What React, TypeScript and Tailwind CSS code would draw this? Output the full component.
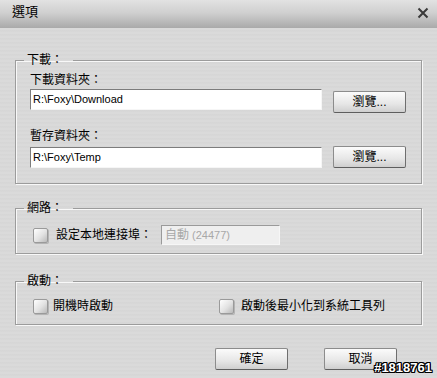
import type { ReactNode } from 'react'

const FONT = "font-['Liberation_Sans','Noto_Sans_CJK_TC',sans-serif]"

function GroupBox({ title, className, children }: { title: string; className?: string; children: ReactNode }) {
  return (
    <fieldset
      className={`mx-[15px] rounded-none border border-[#9c9c9c] px-[8px] shadow-[1px_1px_0_#f8f8f8,inset_1px_1px_0_#f8f8f8] ${className ?? ''}`}
    >
      <legend className="px-[3px] pr-[10px] text-[12px] leading-[14px] text-black">{title}</legend>
      {children}
    </fieldset>
  )
}

function Button({ children, className }: { children: ReactNode; className?: string }) {
  return (
    <button
      type="button"
      className={`flex h-[22px] w-[73px] items-center justify-center rounded-[2px] border border-[#8c8c8c] border-b-[#5e5e5e] border-r-[#6e6e6e] bg-[linear-gradient(#fbfbfb,#e6e6e6_60%,#cfcfcf)] text-[12px] leading-none text-black ${className ?? ''}`}
    >
      {children}
    </button>
  )
}

function Checkbox() {
  return (
    <span className="block h-[15px] w-[15px] shrink-0 rounded-[2px] border border-[#9a9a9a] bg-[linear-gradient(135deg,#ffffff,#e2e2e2_55%,#b9b9b9)] shadow-[1px_1px_0_#b4b4b4]" />
  )
}

function PathInput({ value }: { value: string }) {
  return (
    <div className="flex h-[21px] w-[292px] items-center border border-b-[#f6f6f6] border-l-[#7c7c7c] border-r-[#f6f6f6] border-t-[#7c7c7c] bg-white pl-[2px] font-['Liberation_Sans',sans-serif] text-[11px] text-black">
      {value}
    </div>
  )
}

export default function App() {
  return (
    <div
      className={`relative h-[378px] w-[437px] overflow-hidden bg-[#d8d8d8] bg-[repeating-linear-gradient(180deg,#dadada_0px,#dadada_2px,#d3d3d3_3px,#dcdcdc_4px)] ${FONT}`}
    >
      {/* 標題列 */}
      <div className="flex h-[28px] items-center justify-between bg-[linear-gradient(#e2e2e2,#d0d0d0_45%,#aaaaaa)] pb-[4px] pl-[12px] pr-[8px]">
        <span className="text-[13px] text-black">選項</span>
        <svg width="12" height="12" viewBox="0 0 12 12" className="mt-[2px]">
          <path d="M1.5 1.5 L10.5 10.5 M10.5 1.5 L1.5 10.5" stroke="#3a3a3a" strokeWidth="2" />
        </svg>
      </div>

      {/* 下載 */}
      <GroupBox title="下載：" className="mt-[25px] pb-[15px]">
        <div className="pl-[6px]">
          <p className="mt-[5px] text-[12px] leading-[16px]">下載資料夾：</p>
          <div className="mt-[1px] flex items-start gap-[11px]">
            <PathInput value="R:\Foxy\Download" />
            <Button className="mt-[2px]">瀏覽...</Button>
          </div>
          <p className="mt-[15px] text-[12px] leading-[16px]">暫存資料夾：</p>
          <div className="mt-[2px] flex items-center gap-[11px]">
            <PathInput value="R:\Foxy\Temp" />
            <Button>瀏覽...</Button>
          </div>
        </div>
      </GroupBox>

      {/* 網路 */}
      <GroupBox title="網路：" className="mt-[17px] pb-[8px]">
        <div className="mt-[10px] flex h-[20px] items-center pl-[9px]">
          <Checkbox />
          <span className="ml-[8px] text-[12px]">設定本地連接埠：</span>
          <div className="ml-[9px] flex h-[20px] w-[119px] items-center border border-b-[#f6f6f6] border-l-[#9a9a9a] border-r-[#f6f6f6] border-t-[#9a9a9a] bg-[#efefef] pl-[3px] text-[12px] text-[#a8a8a8]">
            自動 <span className="ml-[3px] font-['Liberation_Sans',sans-serif] text-[11px]">(24477)</span>
          </div>
        </div>
      </GroupBox>

      {/* 啟動 */}
      <GroupBox title="啟動：" className="mt-[20px] pb-[10px]">
        <div className="mt-[10px] flex h-[16px] items-center pl-[9px] text-[12px]">
          <Checkbox />
          <span className="ml-[5px]">開機時啟動</span>
          <div className="ml-[106px] flex items-center">
            <Checkbox />
            <span className="ml-[7px]">啟動後最小化到系統工具列</span>
          </div>
        </div>
      </GroupBox>

      <div className="mt-[23px] flex justify-end gap-[36px] pr-[40px]">
        <Button>確定</Button>
        <Button>取消</Button>
      </div>

      <span className="absolute bottom-[4px] right-[5px] font-['Liberation_Sans',sans-serif] text-[13px] font-bold leading-none text-white [text-shadow:1px_0_0_#000,-1px_0_0_#000,0_1px_0_#000,0_-1px_0_#000,1px_1px_0_#000,-1px_-1px_0_#000,1px_-1px_0_#000,-1px_1px_0_#000]">
        #1818761
      </span>
    </div>
  )
}
